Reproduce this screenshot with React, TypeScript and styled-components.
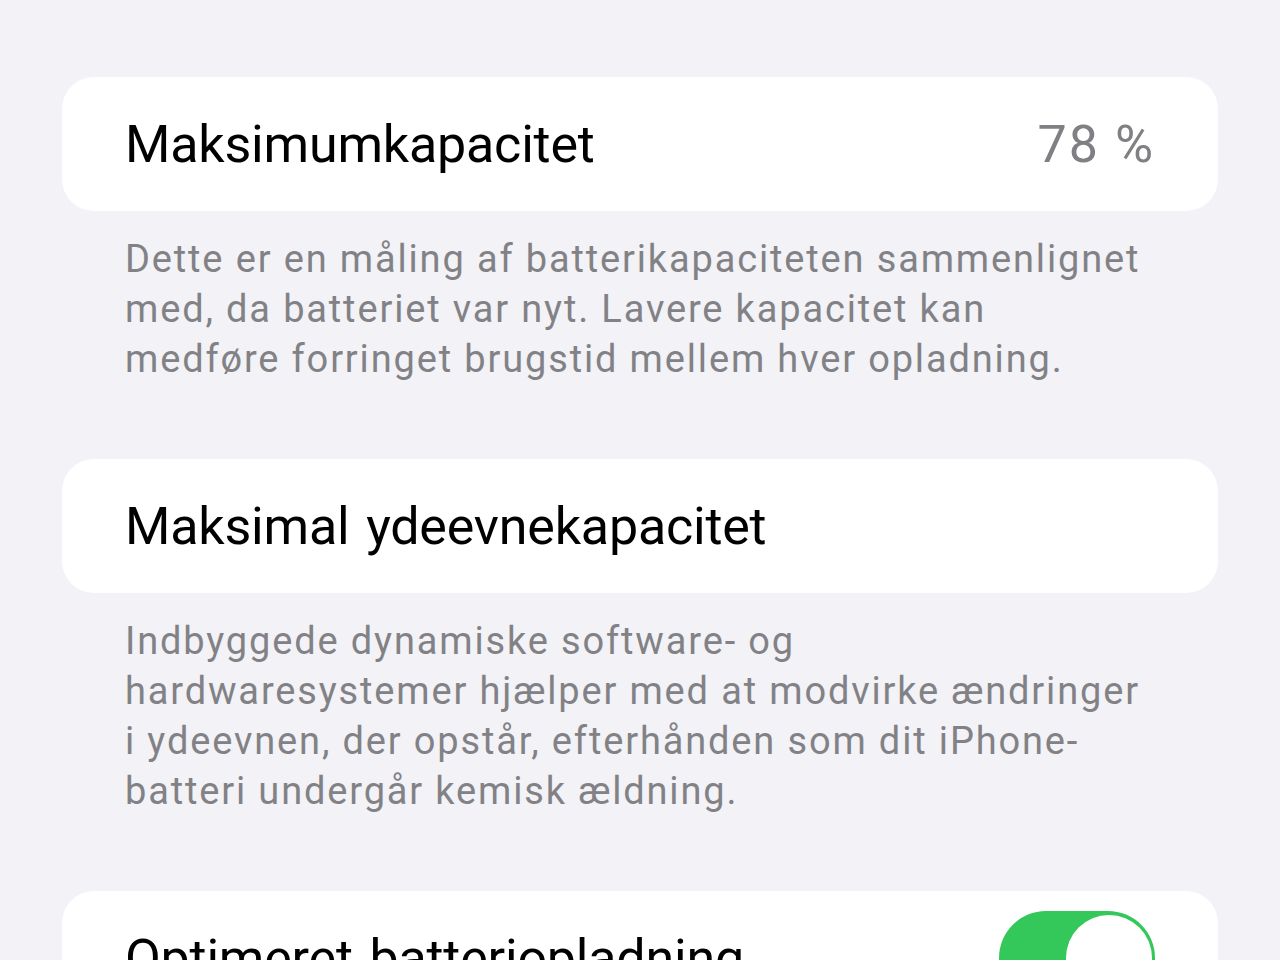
import styled, { createGlobalStyle } from "styled-components";

const Global = createGlobalStyle`
  html, body {
    margin: 0;
    padding: 0;
    background: #f2f2f7;
  }
  body {
    font-family: Roboto, "Liberation Sans", sans-serif;
    -webkit-font-smoothing: antialiased;
  }
`;

const Page = styled.div`
  width: 1280px;
  height: 960px;
  overflow: hidden;
  box-sizing: border-box;
  padding: 77px 62px 0;
  display: flex;
  flex-direction: column;
`;

const Section = styled.section`
  display: flex;
  flex-direction: column;
  margin-bottom: 75px;
`;

const Card = styled.div`
  height: 134px;
  background: #ffffff;
  border-radius: 32px;
  padding: 0 63px;
  display: flex;
  align-items: center;
  justify-content: space-between;
  box-sizing: border-box;
`;

const Title = styled.div`
  font-size: 52px;
  color: #000;
  letter-spacing: -0.2px;
  word-spacing: 4px;
  white-space: nowrap;
`;

const Value = styled.div`
  font-size: 52px;
  color: #808084;
  letter-spacing: 2px;
`;

const Footer = styled.p`
  margin: 23px 63px 0;
  font-size: 38px;
  line-height: 50px;
  color: #828286;
  letter-spacing: 1.85px;
  white-space: nowrap;
`;

const Switch = styled.div<{ on: boolean }>`
  width: 156px;
  height: 94px;
  border-radius: 47px;
  background: ${({ on }) => (on ? "#34c759" : "#e9e9eb")};
  display: flex;
  align-items: center;
  justify-content: ${({ on }) => (on ? "flex-end" : "flex-start")};
  padding: 0 3px;
  box-sizing: border-box;
`;

const Knob = styled.div`
  width: 86px;
  height: 86px;
  border-radius: 50%;
  background: #fff;
`;

export default function App() {
  return (
    <Page>
      <Global />
      <Section>
        <Card>
          <Title>Maksimumkapacitet</Title>
          <Value>78 %</Value>
        </Card>
        <Footer>
          Dette er en måling af batterikapaciteten sammenlignet
          <br />
          med, da batteriet var nyt. Lavere kapacitet kan
          <br />
          medføre forringet brugstid mellem hver opladning.
        </Footer>
      </Section>
      <Section>
        <Card>
          <Title>Maksimal ydeevnekapacitet</Title>
        </Card>
        <Footer>
          Indbyggede dynamiske software- og
          <br />
          hardwaresystemer hjælper med at modvirke ændringer
          <br />
          i ydeevnen, der opstår, efterhånden som dit iPhone-
          <br />
          batteri undergår kemisk ældning.
        </Footer>
      </Section>
      <Section>
        <Card>
          <Title>Optimeret batteriopladning</Title>
          <Switch on>
            <Knob />
          </Switch>
        </Card>
      </Section>
    </Page>
  );
}
